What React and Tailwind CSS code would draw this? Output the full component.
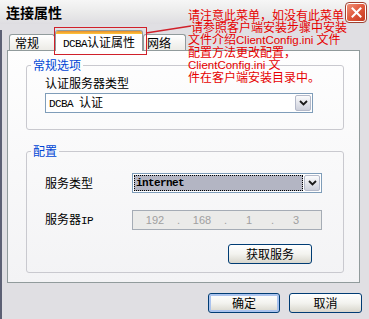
import React from "react";

function Chevron() {
  return (
    <svg width="9" height="6" viewBox="0 0 9 6">
      <path d="M1 1 L4.5 4.5 L8 1" fill="none" stroke="#1a1a1a" strokeWidth="1.8" />
    </svg>
  );
}

function DropBtn() {
  return (
    <div className="w-[16px] h-[16px] flex items-center justify-center rounded-[2px] border border-[#b4b9c9] bg-gradient-to-b from-[#fbfbfc] to-[#cdd0db]">
      <Chevron />
    </div>
  );
}

function Mono({ children, bold }) {
  return (
    <span className={bold ? "font-['Liberation_Mono',monospace] text-[11px] tracking-[-0.6px] font-bold" : "font-['Liberation_Mono',monospace] text-[11px] tracking-[-0.6px]"}>
      {children}
    </span>
  );
}

function XPButton({ children, w, isDefault }) {
  return (
    <button
      className={
        isDefault
          ? "h-[20px] rounded-[3px] border border-[#003c74] bg-gradient-to-b from-white via-[#f3f3ef] to-[#d8d6cc] shadow-[inset_0_0_0_2px_#aac3ee] flex items-center justify-center text-black"
          : "h-[20px] rounded-[3px] border border-[#003c74] bg-gradient-to-b from-white via-[#f3f3ef] to-[#d8d6cc] flex items-center justify-center text-black"
      }
      style={{ width: w }}
    >
      {children}
    </button>
  );
}

export default function App() {
  return (
    <div className="relative w-[369px] h-[319px] overflow-hidden bg-[#e0dfe3] font-['Noto_Sans_CJK_SC','Noto_Sans',sans-serif] text-[12px] leading-[14px] text-black">
      {/* Title bar */}
      <div className="h-[24px] flex items-center justify-between pl-[6px] pr-[3px] bg-gradient-to-b from-[#f6f6f6] via-[#ebebeb] to-[#dedde1]">
        <span className="font-bold text-[14px] leading-[16px]">连接属性</span>
        <div className="w-[20px] h-[19px] rounded-[3px] border border-white outline outline-1 outline-[#a04030] bg-gradient-to-br from-[#f09078] via-[#e0583c] to-[#c4381e] flex items-center justify-center">
          <svg width="11" height="11" viewBox="0 0 11 11">
            <path d="M1.5 1.5 L9.5 9.5 M9.5 1.5 L1.5 9.5" stroke="white" strokeWidth="2" strokeLinecap="square" />
          </svg>
        </div>
      </div>

      <div className="border-l-2 border-[#5c6074] h-[295px]">
        {/* Tabs */}
        <div className="mt-[6px] ml-[7px] h-[20px] flex items-end">
          <div className="w-[46px] h-[16px] border border-b-0 border-[#919b9c] rounded-t-[3px] bg-gradient-to-b from-white to-[#ecebe6] pl-[5px] pt-[1px]">
            常规
          </div>
          <div className="relative z-10 -mb-px w-[88px] h-[21px] border border-b-0 border-[#919b9c] rounded-t-[3px] bg-white overflow-hidden">
            <div className="h-[3px] bg-gradient-to-b from-[#e68b2c] to-[#ffc83c]" />
            <div className="pl-[7px] pt-[1px]">
              <Mono>DCBA</Mono>认证属性
            </div>
          </div>
          <div className="w-[43px] h-[16px] border border-b-0 border-[#919b9c] rounded-t-[3px] bg-gradient-to-b from-white to-[#ecebe6] pl-[3px] pt-[1px]">
            网络
          </div>
        </div>

        {/* Panel */}
        <div className="ml-[5px] w-[353px] h-[233px] border border-[#919b9c] bg-gradient-to-b from-[#fefefe] to-[#f3f3f5]">
          <fieldset className="mt-[7px] ml-[18px] w-[318px] h-[72px] border border-[#c9c9cf] rounded-[3px] px-0 pt-[4px] pb-0 min-w-0">
            <legend className="ml-[4px] px-[2px] text-[#0046d5] leading-[14px]">常规选项</legend>
            <div className="pl-[18px]">
              <div>认证服务器类型</div>
              <div className="mt-[3px] w-[268px] h-[20px] border border-[#7f9db9] bg-white flex items-center justify-between pl-[3px] pr-px">
                <span>
                  <Mono>DCBA </Mono>认证
                </span>
                <DropBtn />
              </div>
            </div>
          </fieldset>

          <fieldset className="mt-[14px] ml-[18px] w-[318px] h-[129px] border border-[#c9c9cf] rounded-[3px] px-0 pt-[15px] pb-0 min-w-0">
            <legend className="ml-[4px] px-[2px] text-[#0046d5] leading-[14px]">配置</legend>
            <div className="pl-[18px]">
              <div className="h-[20px] flex items-center">
                <div className="w-[87px]">服务类型</div>
                <div className="w-[190px] h-[20px] border border-[#7f9db9] bg-white flex items-center p-px gap-px">
                  <div className="flex-1 h-full bg-[#b3b5c3] border border-dotted border-black flex items-center pl-px">
                    <Mono bold>internet</Mono>
                  </div>
                  <DropBtn />
                </div>
              </div>
              <div className="mt-[17px] h-[20px] flex items-center">
                <div className="w-[87px]">
                  服务器<Mono>IP</Mono>
                </div>
                <div className="w-[190px] h-[20px] border border-[#a5acb5] bg-[#ebebe9] flex items-center pl-[7px] font-['Liberation_Sans',sans-serif] text-[11px] text-[#a0a0a0]">
                  <span className="w-[30px] text-center">192</span>
                  <span className="w-[17px] text-center">.</span>
                  <span className="w-[30px] text-center">168</span>
                  <span className="w-[17px] text-center">.</span>
                  <span className="w-[30px] text-center">1</span>
                  <span className="w-[17px] text-center">.</span>
                  <span className="w-[30px] text-center">3</span>
                </div>
              </div>
              <div className="mt-[14px] flex justify-end pr-[31px]">
                <XPButton w="84px">获取服务</XPButton>
              </div>
            </div>
          </fieldset>
        </div>

        {/* Bottom buttons */}
        <div className="mt-[10px] flex justify-end gap-[9px] pr-[7px]">
          <XPButton w="72px" isDefault>确定</XPButton>
          <XPButton w="73px">取消</XPButton>
        </div>
      </div>

      {/* Annotation overlay */}
      <div className="absolute inset-0 pointer-events-none">
        <div className="absolute left-[54px] top-[27px] w-[93px] h-[28px] border-[1.5px] border-[#d0202a]" />
        <svg className="absolute left-0 top-0" width="369" height="60">
          <path d="M146 33 L191 26" stroke="#d0202a" strokeWidth="1.3" fill="none" />
        </svg>
        <div className="absolute left-[188px] top-[9px] text-[12px] leading-[12px] text-[#e60000] whitespace-nowrap">
          <div>请注意此菜单，如没有此菜单</div>
          <div className="pl-[3px]">请参照客户端安装步骤中安装</div>
          <div>
            文件介绍<span className="font-['Liberation_Sans',sans-serif] text-[11.5px]">ClientConfig.ini </span>文件
          </div>
          <div>配置方法更改配置，</div>
          <div>
            <span className="font-['Liberation_Sans',sans-serif] text-[11.5px]">ClientConfig.ini </span>文
          </div>
          <div>件在客户端安装目录中。</div>
        </div>
      </div>
    </div>
  );
}
